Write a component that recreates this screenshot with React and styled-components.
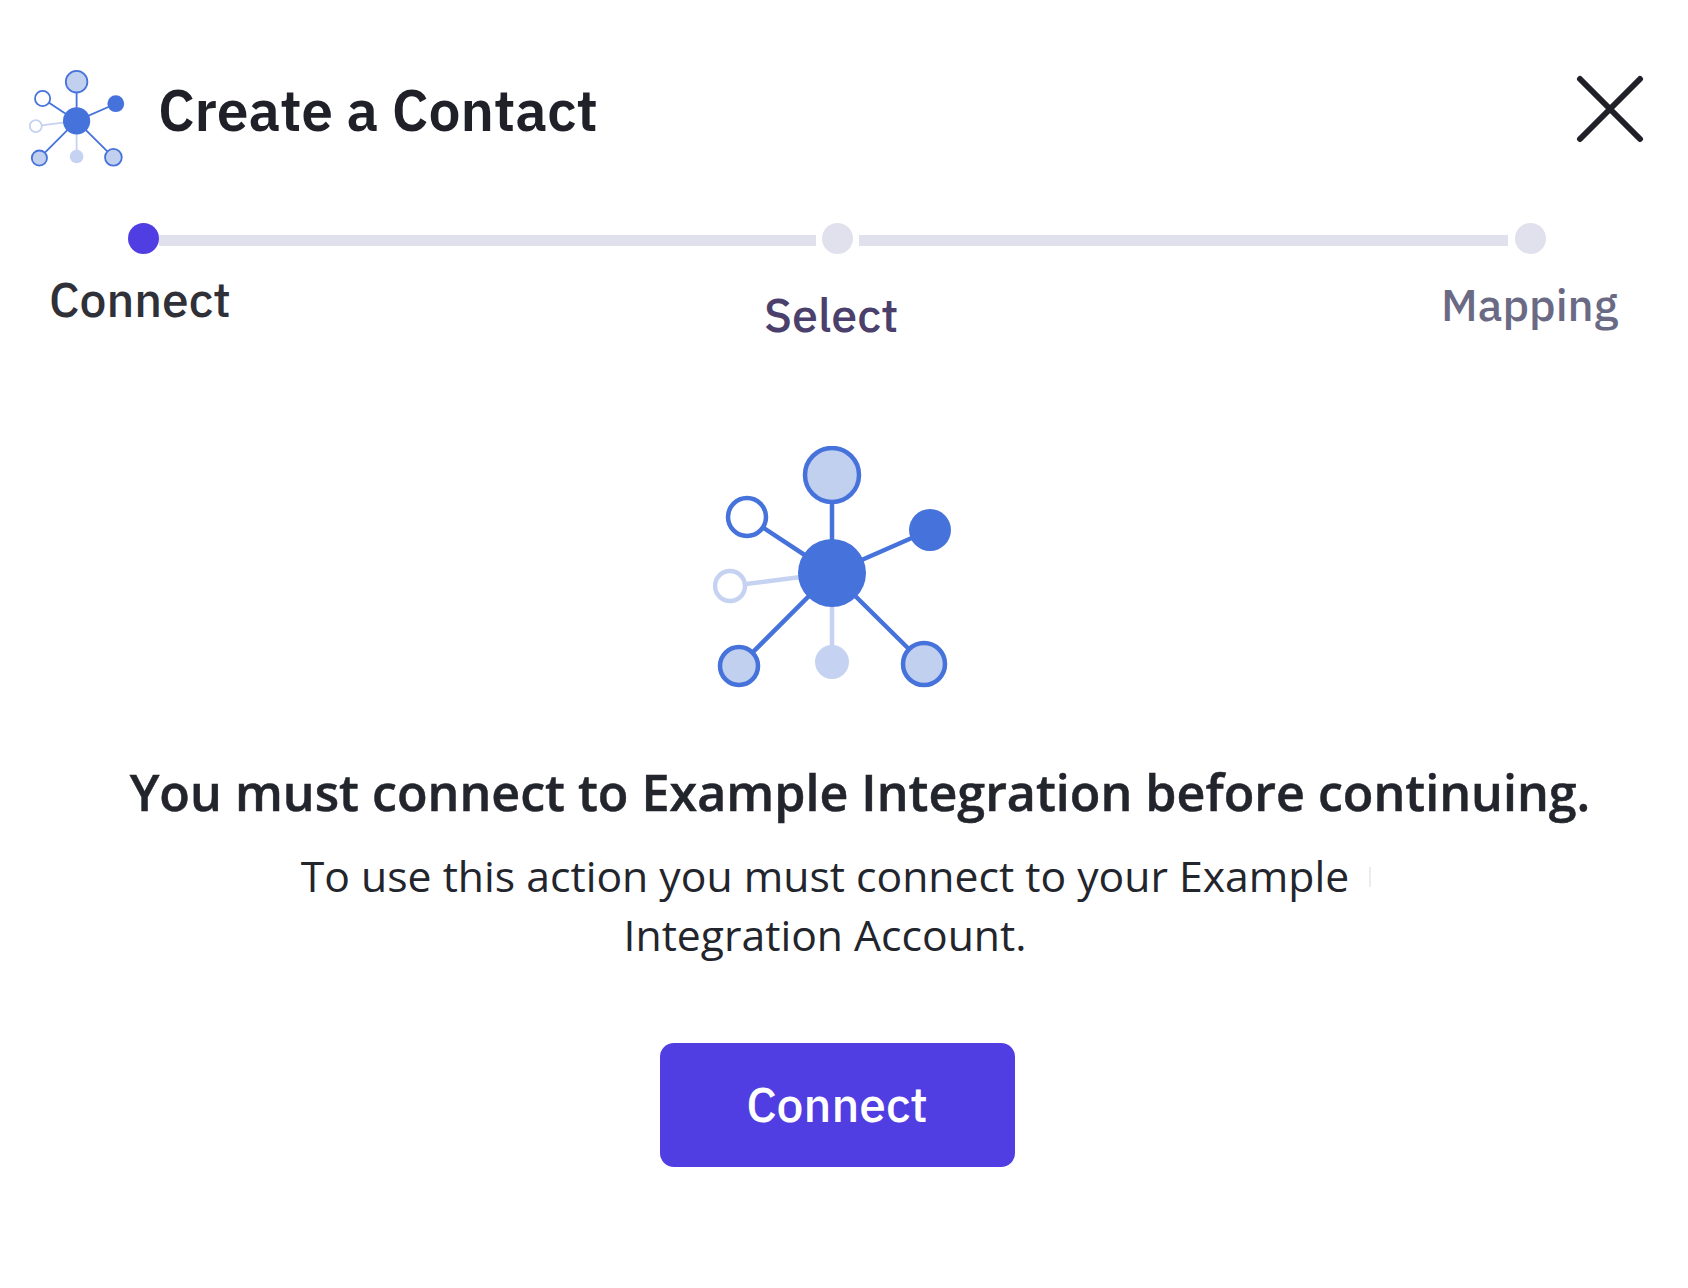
import React from 'react'
import styled, { createGlobalStyle } from 'styled-components'

const Global = createGlobalStyle`
  html, body { margin: 0; padding: 0; background: #fff; }
  * { box-sizing: border-box; }
`
const Page = styled.div`
  width: 1688px;
  height: 1288px;
  background: #fff;
  padding-top: 70px;
  display: flex;
  flex-direction: column;
  overflow: hidden;
  font-family: "IBM Plex Sans", "Noto Sans", sans-serif;
`
const Header = styled.div`
  display: flex;
  align-items: center;
  justify-content: space-between;
  padding: 0 44px 0 29px;
`
const TitleWrap = styled.div`
  display: flex;
  align-items: center;
  gap: 33px;
`
const Title = styled.h1`
  margin: 0;
  padding-bottom: 18px;
  font-size: 57px;
  font-weight: 600;
  color: #1f2028;
`
const CloseIcon = styled.svg`
  margin-bottom: 20px;
`
const Stepper = styled.div`
  display: flex;
  align-items: center;
  margin: 56px 0 0 128px;
`
const Dot = styled.span`
  width: 31px;
  height: 31px;
  border-radius: 50%;
  flex: none;
  background: ${p => (p.$active ? '#513ee2' : '#e1e1ed')};
`
const Line = styled.span`
  flex: none;
  width: ${p => p.$width}px;
  height: 11px;
  margin: 4px ${p => p.$after}px 0 ${p => p.$before}px;
  background: #e1e1ed;
`
const Labels = styled.div`
  display: grid;
  grid-template-columns: 715px 677px auto;
  align-items: start;
  margin: 15px 0 0 49px;
`
const Label = styled.div`
  font-size: ${p => p.$size}px;
  font-weight: 500;
  line-height: 60px;
  color: ${p => p.$color};
  margin-top: ${p => p.$top}px;
`
const Center = styled.div`
  display: flex;
  flex-direction: column;
  align-items: center;
  margin-top: 101px;
`
const BigIcon = styled.svg`
  margin-right: 22px;
`
const Heading = styled.h2`
  margin: 69px 0 0 32px;
  font-family: "Open Sans", sans-serif;
  font-size: 50.2px;
  font-weight: 600;
  -webkit-text-stroke: 0.5px #23252d;
  line-height: 70px;
  white-space: nowrap;
  color: #23252d;
`
const Body = styled.p`
  position: relative;
  margin: 19px 38px 0 0;
  width: 1100px;
  text-align: center;
  font-family: "Open Sans", sans-serif;
  font-size: 42.7px;
  line-height: 59px;
  color: #23252d;
  &::after {
    content: '';
    position: absolute;
    left: 1094px;
    top: 21px;
    width: 2px;
    height: 20px;
    background: #ececee;
  }
`
const ConnectButton = styled.button`
  margin: 79px 14px 0 0;
  width: 355px;
  height: 124px;
  border: none;
  border-radius: 14px;
  background: #513ee2;
  color: #fff;
  font-family: inherit;
  font-size: 48px;
  font-weight: 500;
  padding-bottom: 4px;
`

const NetworkShape = () => (
  <>
    <g strokeWidth="4.5" fill="none">
      <path d="M119 127V30M119 127L34 71M119 127L217 84" stroke="#4672db" />
      <path d="M119 127L17 140M119 127V216" stroke="#c5d2f1" />
      <path d="M119 127L26 220M119 127L211 218" stroke="#4672db" />
    </g>
    <circle cx="119" cy="127" r="34" fill="#4672db" />
    <circle cx="119" cy="29" r="27" fill="#c2d0ef" stroke="#4672db" strokeWidth="4.5" />
    <circle cx="34" cy="71" r="19" fill="#fff" stroke="#4672db" strokeWidth="4.5" />
    <circle cx="217" cy="84" r="21" fill="#4672db" />
    <circle cx="17" cy="140" r="15" fill="#fff" stroke="#c5d2f1" strokeWidth="4.5" />
    <circle cx="26" cy="220" r="19" fill="#c2d0ef" stroke="#4672db" strokeWidth="4.5" />
    <circle cx="119" cy="216" r="17" fill="#c5d2f1" />
    <circle cx="211" cy="218" r="21" fill="#c2d0ef" stroke="#4672db" strokeWidth="4.5" />
  </>
)

export default function App() {
  return (
    <Page>
      <Global />
      <Header>
        <TitleWrap>
          <svg width="96" height="97" viewBox="0 0 240 242"><NetworkShape /></svg>
          <Title>Create a Contact</Title>
        </TitleWrap>
        <CloseIcon width="68" height="68" viewBox="0 0 68 68">
          <path d="M4 4L64 64M64 4L4 64" stroke="#1f2028" strokeWidth="6" strokeLinecap="round" />
        </CloseIcon>
      </Header>
      <Stepper>
        <Dot $active />
        <Line $width={657} $before={0} $after={6} />
        <Dot />
        <Line $width={649} $before={6} $after={7} />
        <Dot />
      </Stepper>
      <Labels>
        <Label $size={48} $color="#2f3038" $top={0}>Connect</Label>
        <Label $size={46.8} $color="#4b3f6b" $top={16}>Select</Label>
        <Label $size={45} $color="#6a6a85" $top={5}>Mapping</Label>
      </Labels>
      <Center>
        <BigIcon width="240" height="242" viewBox="0 0 240 242"><NetworkShape /></BigIcon>
        <Heading>You must connect to Example Integration before continuing.</Heading>
        <Body>To use this action you must connect to your Example Integration Account.</Body>
        <ConnectButton>Connect</ConnectButton>
      </Center>
    </Page>
  )
}
